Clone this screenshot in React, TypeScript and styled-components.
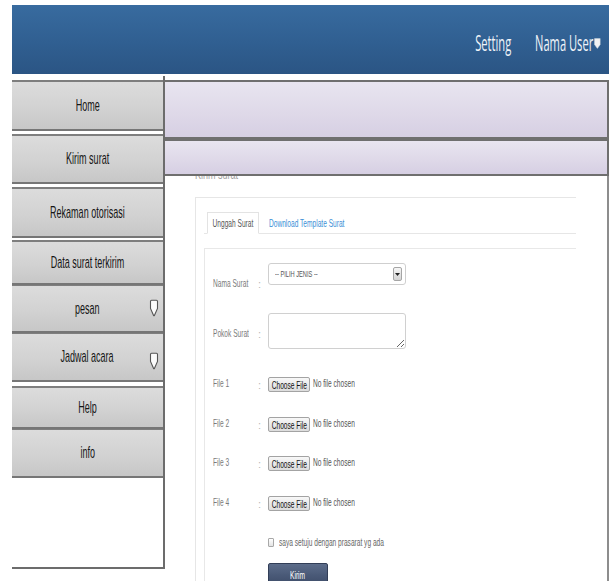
import styled, { createGlobalStyle, css } from "styled-components";

const GlobalStyle = createGlobalStyle`
  html, body {
    margin: 0;
    padding: 0;
    background: #fff;
  }
  body {
    font-family: "Liberation Sans", Arial, sans-serif;
    overflow: hidden;
  }
  * {
    box-sizing: border-box;
  }
`;

// the whole layout uses a tall, narrow lettering
const squeeze = (ratio: number, origin = "left") => css`
  display: inline-block;
  white-space: nowrap;
  transform: scaleX(${ratio});
  transform-origin: ${origin} center;
`;

const Page = styled.div`
  width: 614px;
  height: 581px;
  padding: 5px 5px 0 12px;
  display: flex;
  flex-direction: column;
  overflow: hidden;
`;

const Header = styled.header`
  height: 69px;
  flex-shrink: 0;
  background: linear-gradient(180deg, #386b9f 0%, #305f91 55%, #2b5584 100%);
  display: flex;
  align-items: center;
  justify-content: flex-end;
  padding: 7px 8px 0 0;
`;

const Nav = styled.nav`
  display: flex;
  align-items: center;
  gap: 45px;
  transform: scaleX(0.53);
  transform-origin: right center;
`;

const NavLink = styled.span`
  font-family: "Open Sans", "Liberation Sans", sans-serif;
  font-size: 21px;
  line-height: 26px;
  color: #eef3f8;
  white-space: nowrap;
`;

const UserMenu = styled.span`
  display: flex;
  align-items: center;
  gap: 1px;
`;

const Body = styled.div`
  display: flex;
  flex: 1;
  min-height: 0;
  margin-top: 2px;
`;

const Sidebar = styled.aside`
  width: 153px;
  height: 493px;
  flex-shrink: 0;
  padding-top: 4px;
  background: #fff;
  border-right: 2px solid #6c6c6c;
  border-bottom: 2px solid #6c6c6c;
`;

const MenuItem = styled.div<{ $h: number; $mt: number; $flush?: boolean }>`
  height: ${(p) => p.$h}px;
  margin-top: ${(p) => p.$mt}px;
  display: grid;
  grid-template-columns: 20px minmax(0, 1fr) 20px;
  align-items: center;
  background: linear-gradient(180deg, #dcdcdc 0%, #d2d2d2 55%, #c7c7c7 100%);
  border-top: ${(p) => (p.$flush ? 1 : 2)}px solid #7e7e7e;
  border-bottom: 2px solid #767676;
`;

const MenuLabel = styled.div`
  grid-column: 2;
  display: flex;
  justify-content: center;
  min-width: 0;
`;

const MenuText = styled.span`
  ${squeeze(0.53, "center")}
  font-size: 17px;
  line-height: 20px;
  color: #161616;
`;

const MenuCaret = styled.svg<{ $drop: number }>`
  grid-column: 3;
  margin: ${(p) => p.$drop}px 0 0 6px;
  display: block;
`;

const Main = styled.main`
  flex: 1;
  min-width: 0;
  display: flex;
  flex-direction: column;
  padding-top: 4px;
`;

const Band = styled.div<{ $h: number }>`
  height: ${(p) => p.$h}px;
  flex-shrink: 0;
  background: linear-gradient(180deg, #e8e5f0 0%, #ded8e8 60%, #d6cfe3 100%);
  border: 2px solid #6f6f6f;
  border-left: 0;
`;

const Content = styled.section`
  flex: 1;
  padding-left: 30px;
  border-right: 2px solid #8d8d8d;
`;

const Caption = styled.div`
  height: 4px;
  overflow: hidden;
`;

const CaptionText = styled.div`
  margin-top: -10px;
  font-size: 15px;
  line-height: 15px;
  color: #a2a2a2;
  white-space: nowrap;
  transform: scaleX(0.6);
  transform-origin: left center;
`;

const Panel = styled.div`
  width: 381px;
  margin-top: 17px;
  padding: 14px 0 0 8px;
  border-top: 1px solid #e6e6e6;
  border-left: 1px solid #e6e6e6;
  height: 390px;
  display: flex;
  flex-direction: column;
`;

const Tabs = styled.div`
  height: 28px;
  display: flex;
  padding-left: 3px;
  border-bottom: 1px solid #e6e6e6;
`;

const Tab = styled.div`
  width: 52px;
  margin-bottom: -1px;
  display: flex;
  align-items: center;
  justify-content: center;
  background: #fff;
  border: 1px solid #e3e3e3;
  border-bottom-color: #fff;
`;

const TabText = styled.span<{ $link?: boolean }>`
  ${(p) => squeeze(0.6, p.$link ? "left" : "center")}
  font-size: 11px;
  line-height: 12px;
  color: ${(p) => (p.$link ? "#3b8fd6" : "#555")};
`;

const TabLink = styled.div`
  margin-left: 10px;
  display: flex;
  align-items: center;
`;

const FormBox = styled.div`
  flex: 1;
  margin-top: 14px;
  padding: 14px 0 0 8px;
  border-top: 1px solid #e8e8e8;
  border-left: 1px solid #e8e8e8;
  display: flex;
  flex-direction: column;
`;

const Row = styled.div<{ $mt: number }>`
  display: grid;
  grid-template-columns: 45px 10px auto;
  align-items: start;
  margin-top: ${(p) => p.$mt}px;
`;

const Label = styled.span<{ $pt: number }>`
  ${squeeze(0.6)}
  padding-top: ${(p) => p.$pt}px;
  font-size: 11px;
  line-height: 12px;
  color: #7a7a7a;
`;

const Colon = styled.span<{ $pt: number }>`
  padding-top: ${(p) => p.$pt}px;
  font-size: 11px;
  line-height: 12px;
  color: #b9b9b9;
`;

const Field = styled.div`
  grid-column: 3;
  display: flex;
  align-items: flex-start;
`;

const Select = styled.div`
  width: 138px;
  height: 22px;
  display: flex;
  align-items: center;
  justify-content: space-between;
  padding: 0 3px 0 6px;
  background: #fff;
  border: 1px solid #cfcfcf;
  border-radius: 3px;
`;

const SelectText = styled.span`
  ${squeeze(0.6)}
  font-size: 9.5px;
  line-height: 10px;
  color: #555;
`;

const SelectArrow = styled.span`
  width: 9px;
  height: 14px;
  display: flex;
  align-items: center;
  justify-content: center;
  border: 1px solid #a5a5a5;
  border-radius: 2px;
  background: linear-gradient(180deg, #f6f6f6, #d4d4d4);
`;

const TextArea = styled.textarea`
  display: block;
  width: 138px;
  height: 36px;
  margin: 0;
  padding: 2px;
  border: 1px solid #d0d0d0;
  border-radius: 3px;
  background: #fff;
  font: inherit;
`;

const FileButton = styled.span`
  width: 42px;
  height: 15px;
  display: flex;
  align-items: center;
  justify-content: center;
  border: 1px solid #a3a3a3;
  border-radius: 2px;
  background: linear-gradient(180deg, #f8f8f8, #dcdcdc);
`;

const ButtonText = styled.span<{ $light?: boolean }>`
  ${squeeze(0.6, "center")}
  font-size: 11px;
  line-height: 12px;
  color: ${(p) => (p.$light ? "#fff" : "#111")};
`;

const FileStatus = styled.span`
  ${squeeze(0.6)}
  margin-left: 3px;
  font-size: 11px;
  line-height: 12px;
  color: #555;
`;

const Agree = styled.label`
  grid-column: 3;
  display: flex;
  align-items: center;
`;

const CheckBox = styled.span`
  width: 6px;
  height: 9px;
  border: 1px solid #a8a8a8;
  border-radius: 1px;
  background: linear-gradient(180deg, #fff, #e4e4e4);
`;

const AgreeText = styled.span`
  ${squeeze(0.6)}
  margin-left: 5px;
  font-size: 11px;
  line-height: 12px;
  color: #666;
`;

const SubmitButton = styled.button`
  grid-column: 3;
  width: 60px;
  height: 24px;
  padding: 0;
  display: flex;
  align-items: center;
  justify-content: center;
  border: 1px solid #323e57;
  border-radius: 2px;
  background: linear-gradient(180deg, #5d6d8a 0%, #4a5a78 50%, #3c4a66 100%);
  font: inherit;
`;

const Caret = ({ drop }: { drop: number }) => (
  <MenuCaret $drop={drop} width="10" height="18" viewBox="0 0 10 18">
    <path
      d="M1.5 2.2 Q1.5 1.2 2.5 1.2 H7.5 Q8.5 1.2 8.5 2.2 V9.5 L5.4 16.4 Q5 17.2 4.6 16.4 L1.5 9.5 Z"
      fill="#fbfbfb"
      stroke="#555"
      strokeWidth="1.1"
    />
  </MenuCaret>
);

type MenuEntry = {
  label: string;
  h: number;
  mt: number;
  flush?: boolean;
  caret?: number;
};

const menu: MenuEntry[] = [
  { label: "Home", h: 51, mt: 0 },
  { label: "Kirim surat", h: 50, mt: 3 },
  { label: "Rekaman otorisasi", h: 51, mt: 3 },
  { label: "Data surat terkirim", h: 45, mt: 2 },
  { label: "pesan", h: 48, mt: 0, flush: true, caret: -2 },
  { label: "Jadwal acara", h: 49, mt: 0, flush: true, caret: 8 },
  { label: "Help", h: 43, mt: 4 },
  { label: "info", h: 49, mt: 0, flush: true },
];

const fileRows = [
  { label: "File 1", mt: 28 },
  { label: "File 2", mt: 25 },
  { label: "File 3", mt: 24 },
  { label: "File 4", mt: 25 },
];

export default function App() {
  return (
    <>
      <GlobalStyle />
      <Page>
        <Header>
          <Nav>
            <NavLink>Setting</NavLink>
            <UserMenu>
              <NavLink>Nama User</NavLink>
              <svg width="13" height="11" viewBox="0 0 7 11" preserveAspectRatio="none">
                <path
                  d="M0.6 0.6 H6.4 V6.6 L3.5 10.4 L0.6 6.6 Z"
                  fill="#f3f3f3"
                  stroke="#cfd6de"
                  strokeWidth="0.5"
                />
              </svg>
            </UserMenu>
          </Nav>
        </Header>

        <Body>
          <Sidebar>
            {menu.map((item) => (
              <MenuItem key={item.label} $h={item.h} $mt={item.mt} $flush={item.flush}>
                <MenuLabel>
                  <MenuText>{item.label}</MenuText>
                </MenuLabel>
                {item.caret !== undefined && <Caret drop={item.caret} />}
              </MenuItem>
            ))}
          </Sidebar>

          <Main>
            <Band $h={59} />
            <Band $h={37} />
            <Content>
              <Caption>
                <CaptionText>Kirim surat</CaptionText>
              </Caption>

              <Panel>
                <Tabs>
                  <Tab>
                    <TabText>Unggah Surat</TabText>
                  </Tab>
                  <TabLink>
                    <TabText $link>Download Template Surat</TabText>
                  </TabLink>
                </Tabs>

                <FormBox>
                  <Row $mt={0}>
                    <Label $pt={14}>Nama Surat</Label>
                    <Colon $pt={15}>:</Colon>
                    <Field>
                      <Select>
                        <SelectText>-- PILIH JENIS --</SelectText>
                        <SelectArrow>
                          <svg width="5" height="3" viewBox="0 0 5 3">
                            <path d="M0 0 H5 L2.5 3 Z" fill="#222" />
                          </svg>
                        </SelectArrow>
                      </Select>
                    </Field>
                  </Row>

                  <Row $mt={23}>
                    <Label $pt={14}>Pokok Surat</Label>
                    <Colon $pt={15}>:</Colon>
                    <Field>
                      <TextArea />
                    </Field>
                  </Row>

                  {fileRows.map((row) => (
                    <Row key={row.label} $mt={row.mt}>
                      <Label $pt={0}>{row.label}</Label>
                      <Colon $pt={2}>:</Colon>
                      <Field>
                        <FileButton>
                          <ButtonText>Choose File</ButtonText>
                        </FileButton>
                        <FileStatus>No file chosen</FileStatus>
                      </Field>
                    </Row>
                  ))}

                  <Row $mt={25}>
                    <Agree>
                      <CheckBox />
                      <AgreeText>saya setuju dengan prasarat yg ada</AgreeText>
                    </Agree>
                  </Row>

                  <Row $mt={15}>
                    <SubmitButton type="button">
                      <ButtonText $light>Kirim</ButtonText>
                    </SubmitButton>
                  </Row>
                </FormBox>
              </Panel>
            </Content>
          </Main>
        </Body>
      </Page>
    </>
  );
}
